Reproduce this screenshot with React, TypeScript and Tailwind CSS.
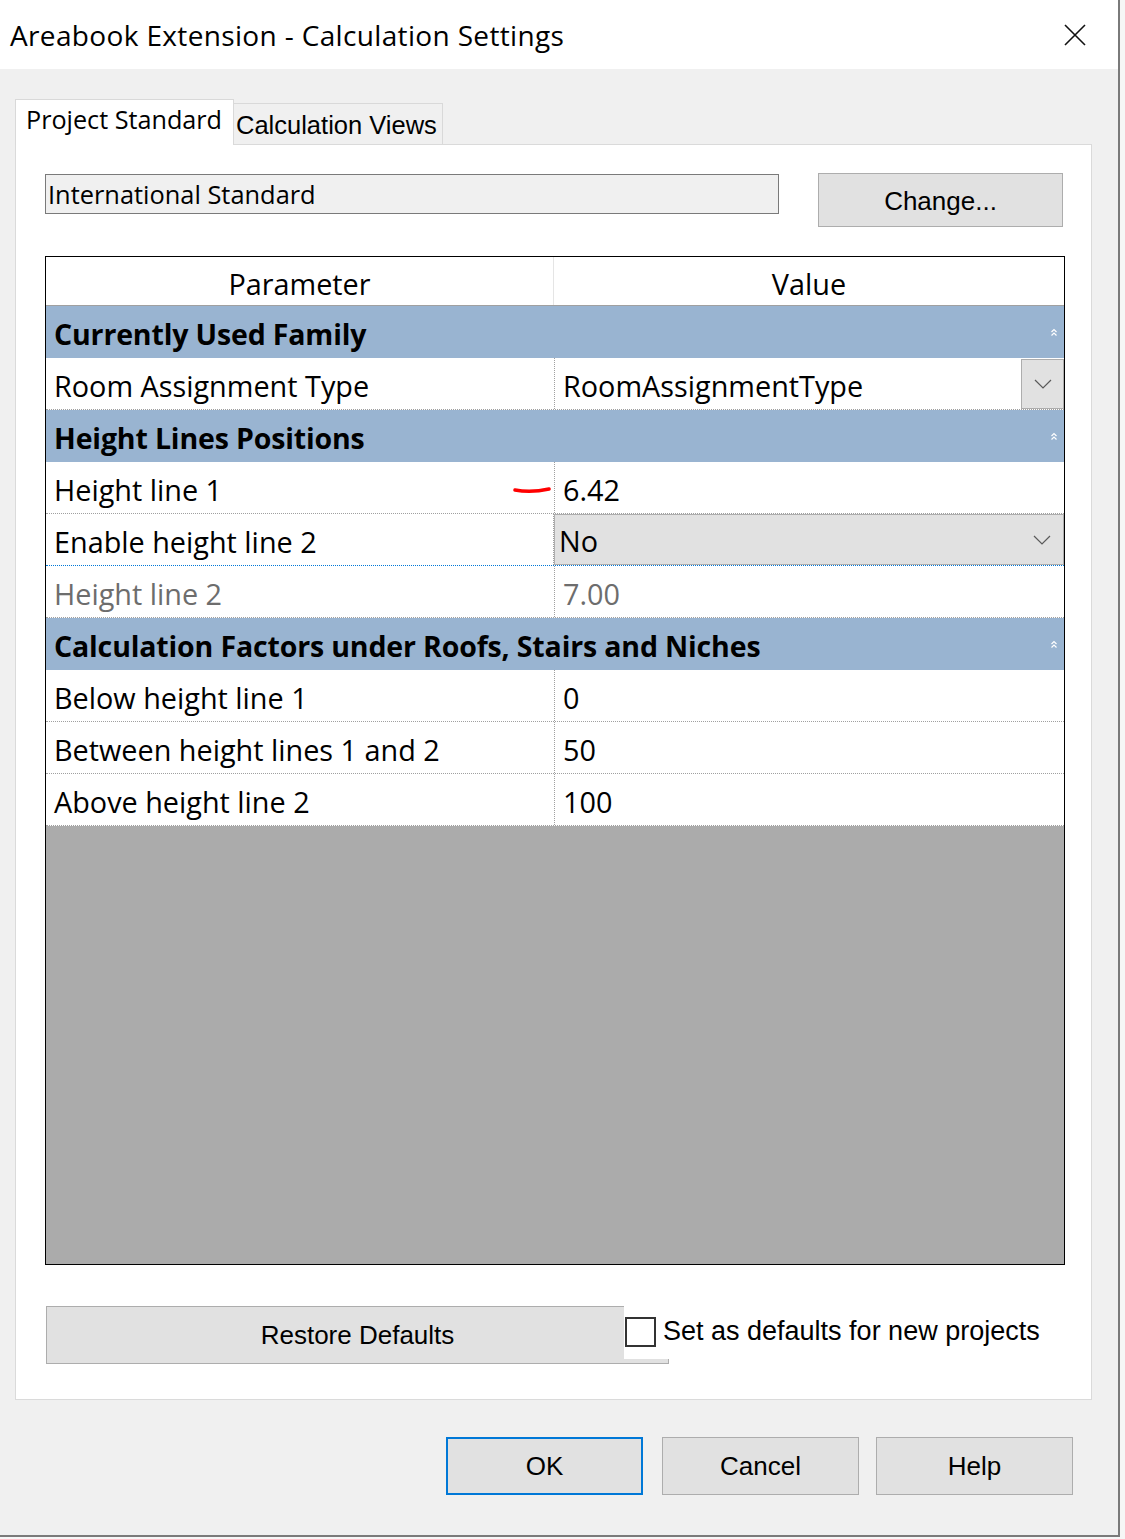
import React from "react";

const seg = { fontFamily: '"Open Sans", "Noto Sans", sans-serif' };
const ms = { fontFamily: '"Liberation Sans", Arial, sans-serif' };

function Chevron() {
    return (
        <svg width="18" height="10" viewBox="0 0 18 10" className="shrink-0">
            <path d="M1 1 L9 9 L17 1" fill="none" stroke="#5a5a5a" strokeWidth="1.2" />
        </svg>
    );
}

function Collapse() {
    return (
        <svg width="6" height="9" viewBox="0 0 6 9" className="shrink-0">
            <path d="M0.5 4 L3 1.5 L5.5 4 M0.5 7.5 L3 5 L5.5 7.5" fill="none" stroke="#ffffff" strokeWidth="1.2" />
        </svg>
    );
}

function Category({ title }: { title: string }) {
    return (
        <div className="h-[52px] bg-[#99b4d1] flex items-center justify-between pl-[8px] pr-[7px]">
            <span className="pt-[4px] text-[28.5px] font-bold text-black leading-none tracking-[-0.15px]">{title}</span>
            <Collapse />
        </div>
    );
}

function Row({ name, value, muted, children, marked }: { name: string; value?: string; muted?: boolean; children?: React.ReactNode; marked?: boolean }) {
    const color = muted ? "text-[#6d6d6d]" : "text-black";
    return (
        <div className="h-[52px] flex border-b border-dotted border-[#a0a0a0]">
            <div className={`relative w-[508px] shrink-0 flex items-center pl-[8px] pt-[4px] text-[28.8px] ${color}`}>
                {name}
                {marked && (
                    <svg width="40" height="10" viewBox="0 0 40 10" className="absolute left-[467px] top-[23px]">
                        <path d="M2 5 Q18 8 36 4" fill="none" stroke="#ff0000" strokeWidth="3.5" strokeLinecap="round" />
                    </svg>
                )}
            </div>
            <div className={`flex-1 flex items-center border-l border-dotted border-[#a0a0a0] text-[28.8px] ${color}`}>
                {children ?? <span className="pl-[8px] pt-[4px]">{value}</span>}
            </div>
        </div>
    );
}

export default function App() {
    return (
        <div className="w-[1125px] h-[1539px] overflow-hidden bg-[#f6f6f6]">
            <div className="w-[1120px] h-[1537px] border-r-2 border-b-2 border-[#7a7a7a] bg-[#f0f0f0] flex flex-col" style={seg}>
                <div className="h-[69px] bg-white flex items-center justify-between pl-[10px] pr-[32px]">
                    <span className="text-[28px] text-black tracking-[0.35px]">Areabook Extension - Calculation Settings</span>
                    <svg width="22" height="22" viewBox="0 0 22 22">
                        <path d="M1 1 L21 21 M21 1 L1 21" stroke="#111" strokeWidth="1.6" />
                    </svg>
                </div>

                <div className="pl-[15px] pt-[30px]">
                    <div className="flex items-end h-[45px]">
                        <div className="relative z-10 -mb-px h-[46px] w-[219px] bg-white border-x border-t border-[#d9d9d9] pl-[10px] pt-[1px] text-[25.2px] text-black">
                            Project Standard
                        </div>
                        <div className="h-[41px] w-[209px] border-t border-r border-[#d9d9d9] pl-[2px] pt-[2px] text-[25.5px] text-black" style={ms}>
                            Calculation Views
                        </div>
                    </div>

                    <div className="w-[1077px] h-[1256px] bg-white border border-[#dadada] pl-[29px] pt-[28px]">
                        <div className="flex items-start">
                            <div className="mt-px w-[734px] h-[40px] bg-[#f0f0f0] border border-[#7a7a7a] flex items-center pl-[2px] text-[25.4px] text-black">
                                International Standard
                            </div>
                            <button className="ml-[39px] w-[245px] h-[54px] bg-[#e1e1e1] border border-[#adadad] text-[26px] text-black pt-[3px]" style={ms}>
                                Change...
                            </button>
                        </div>

                        <div className="mt-[29px] w-[1020px] h-[1009px] border border-black flex flex-col">
                            <div className="h-[49px] flex border-b border-[#a0a0a0] bg-white text-[28.8px] text-black pt-[5px]">
                                <div className="w-[508px] flex items-center justify-center border-r border-[#e5e5e5] -mt-[5px] pt-[5px]">Parameter</div>
                                <div className="flex-1 flex items-center justify-center">Value</div>
                            </div>
                            <Category title="Currently Used Family" />
                            <Row name="Room Assignment Type">
                                <span className="pl-[8px] pt-[4px] flex-1">RoomAssignmentType</span>
                                <div className="w-[43px] h-[50px] bg-[#e1e1e1] border border-[#adadad] flex items-center justify-center">
                                    <Chevron />
                                </div>
                            </Row>
                            <Category title="Height Lines Positions" />
                            <Row name="Height line 1" value="6.42" marked />
                            <div className="h-[52px] flex border-b border-dotted border-[#0078d7]">
                                <div className="w-[508px] shrink-0 flex items-center pl-[8px] pt-[4px] text-[28.8px] text-black border-r border-dotted border-[#a0a0a0]">
                                    Enable height line 2
                                </div>
                                <div className="flex-1 flex items-center justify-between bg-[#e1e1e1] border border-[#adadad] pl-[4px] pr-[12px] text-[28.8px] text-black">
                                    <span className="pt-[3px]">No</span>
                                    <Chevron />
                                </div>
                            </div>
                            <Row name="Height line 2" value="7.00" muted />
                            <Category title="Calculation Factors under Roofs, Stairs and Niches" />
                            <Row name="Below height line 1" value="0" />
                            <Row name="Between height lines 1 and 2" value="50" />
                            <Row name="Above height line 2" value="100" />
                            <div className="flex-1 bg-[#ababab]" />
                        </div>

                        <div className="mt-[41px] flex items-start">
                            <button className="ml-px w-[623px] h-[58px] bg-[#e1e1e1] border border-[#adadad] text-[26px] text-black" style={ms}>
                                Restore Defaults
                            </button>
                            <label className="relative -ml-[45px] h-[53px] bg-white flex items-start pt-[11px] pl-px gap-[7px] text-[27px] text-black" style={ms}>
                                <span className="w-[31px] h-[30px] border-2 border-[#333] bg-white shrink-0" />
                                <span className="-mt-[4px] leading-[36px]">Set as defaults for new projects</span>
                            </label>
                        </div>
                    </div>
                </div>

                <div className="flex justify-end pr-[45px] pt-[37px]" style={ms}>
                    <button className="w-[197px] h-[58px] bg-[#e1e1e1] border-2 border-[#0078d7] text-[26px] text-black">OK</button>
                    <button className="ml-[19px] w-[197px] h-[58px] bg-[#e1e1e1] border border-[#adadad] text-[26px] text-black">Cancel</button>
                    <button className="ml-[17px] w-[197px] h-[58px] bg-[#e1e1e1] border border-[#adadad] text-[26px] text-black">Help</button>
                </div>
            </div>
        </div>
    );
}
